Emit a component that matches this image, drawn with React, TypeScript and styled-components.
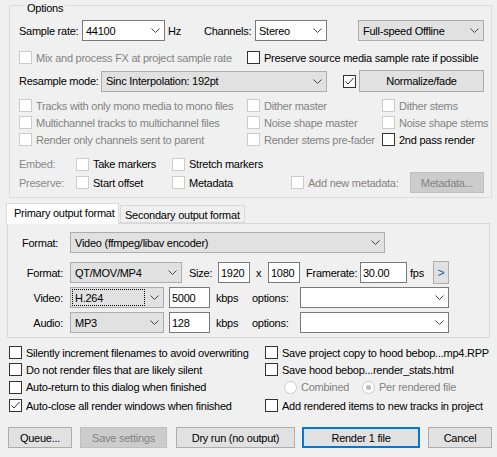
import React from "react";
import styled, { createGlobalStyle } from "styled-components";

const GlobalStyle = createGlobalStyle`
  html, body {
    margin: 0;
    padding: 0;
    background: #f0f0f0;
  }
  body {
    font-family: "Liberation Sans", Arial, sans-serif;
    font-size: 11px;
    letter-spacing: -0.25px;
    color: #000;
  }
  * {
    box-sizing: border-box;
  }
`;

const Dialog = styled.div`
  width: 497px;
  height: 457px;
  overflow: hidden;
  display: flex;
  flex-direction: column;
`;

const Group = styled.div`
  margin: 5px 5px 0 9px;
  border: 1px solid #dcdcdc;
  padding: 0 0 4px 9px;
  display: flex;
  flex-direction: column;
`;

const GroupTitle = styled.div`
  margin: -5px 0 0 6px;
  padding: 0 2px;
  width: fit-content;
  line-height: 14px;
  background: #f0f0f0;
`;

const Row = styled.div<{ $mt?: number; $h?: number }>`
  display: flex;
  align-items: center;
  height: ${(p) => p.$h ?? 21}px;
  margin-top: ${(p) => p.$mt ?? 0}px;
  white-space: nowrap;
`;

const Label = styled.span<{ $w?: number; $ml?: number; $pl?: number; $right?: boolean; $grey?: boolean }>`
  flex: none;
  width: ${(p) => (p.$w ? `${p.$w}px` : "auto")};
  margin-left: ${(p) => p.$ml ?? 0}px;
  padding-left: ${(p) => p.$pl ?? 0}px;
  text-align: ${(p) => (p.$right ? "right" : "left")};
  padding-right: ${(p) => (p.$right ? 7 : 0)}px;
  color: ${(p) => (p.$grey ? "#8a8a8a" : "#000")};
  white-space: nowrap;
`;

const CheckGrid = styled.div`
  display: grid;
  grid-template-columns: 228px 135px auto;
  grid-auto-rows: 17px;
  align-items: center;
  margin-top: 5px;
`;

const BoxEl = styled.span<{ $light?: boolean; $round?: boolean }>`
  flex: none;
  width: 13px;
  height: 13px;
  border: 1px solid ${(p) => (p.$light ? "#cccccc" : "#333333")};
  border-radius: ${(p) => (p.$round ? "50%" : "0")};
  background: #fff;
  display: flex;
  align-items: center;
  justify-content: center;
`;

const Dot = styled.span`
  width: 5px;
  height: 5px;
  border-radius: 50%;
  background: #bcbcbc;
`;

const CheckLabel = styled.label<{ $w?: number; $ml?: number; $grey?: boolean }>`
  flex: none;
  display: flex;
  align-items: center;
  gap: 4px;
  width: ${(p) => (p.$w ? `${p.$w}px` : "auto")};
  margin-left: ${(p) => p.$ml ?? 0}px;
  color: ${(p) => (p.$grey ? "#838383" : "#000")};
  white-space: nowrap;
`;

const Combo = styled.div<{ $w: number; $grey?: boolean; $ml?: number }>`
  flex: none;
  width: ${(p) => p.$w}px;
  height: 21px;
  margin-left: ${(p) => p.$ml ?? 0}px;
  border: 1px solid ${(p) => (p.$grey ? "#adadad" : "#7a7a7a")};
  background: ${(p) => (p.$grey ? "#e1e1e1" : "#fff")};
  display: flex;
  align-items: stretch;
`;

const ComboValue = styled.span<{ $grey?: boolean; $focus?: boolean }>`
  flex: 1;
  display: flex;
  align-items: center;
  overflow: hidden;
  margin: 1px 0 1px 1px;
  padding-left: ${(p) => (p.$grey ? 2 : 1)}px;
  border: 1px dotted ${(p) => (p.$focus ? "#000" : "transparent")};
`;

const ChevronBox = styled.span`
  flex: none;
  width: 18px;
  display: flex;
  align-items: center;
  justify-content: center;
`;

const TextBox = styled.div<{ $w: number; $ml?: number }>`
  flex: none;
  width: ${(p) => p.$w}px;
  height: 21px;
  margin-left: ${(p) => p.$ml ?? 0}px;
  border: 1px solid #7a7a7a;
  background: #fff;
  padding-left: 2px;
  display: flex;
  align-items: center;
`;

const Button = styled.button<{ $w: number; $ml?: number; $h?: number; $default?: boolean }>`
  flex: none;
  width: ${(p) => p.$w}px;
  height: ${(p) => p.$h ?? 21}px;
  margin: 0 0 0 ${(p) => p.$ml ?? 0}px;
  padding: 0;
  font: inherit;
  letter-spacing: inherit;
  color: #000;
  background: #e1e1e1;
  border: 1px solid ${(p) => (p.$default ? "#0078d7" : "#adadad")};
  box-shadow: ${(p) => (p.$default ? "inset 0 0 0 1px #0078d7" : "none")};
  border-radius: 0;

  &:disabled {
    background: #cccccc;
    border-color: #bfbfbf;
    color: #838383;
  }
`;

const ArrowButton = styled(Button)`
  color: #2a5a96;
  font-size: 12px;
`;

const TabBar = styled.div`
  display: flex;
  align-items: flex-end;
  margin: 4px 0 0 6px;
  height: 21px;
  position: relative;
  z-index: 1;
`;

const Tab = styled.div<{ $active?: boolean; $w: number }>`
  width: ${(p) => p.$w}px;
  height: ${(p) => (p.$active ? 21 : 18)}px;
  margin-left: ${(p) => (p.$active ? 0 : 1)}px;
  border: 1px solid #d9d9d9;
  border-bottom: ${(p) => (p.$active ? "none" : "1px solid #d9d9d9")};
  background: ${(p) => (p.$active ? "#fff" : "#f0f0f0")};
  padding: ${(p) => (p.$active ? "2px 0 0 7px" : "2px 0 0 4px")};
  margin-bottom: ${(p) => (p.$active ? -1 : 0)}px;
  white-space: nowrap;
  overflow: hidden;
  line-height: 14px;
`;

const Pane = styled.div`
  margin: 0 7px 0 7px;
  border: 1px solid #d9d9d9;
  padding: 8px 0 4px 14px;
  display: flex;
  flex-direction: column;
`;

const BottomGrid = styled.div`
  display: grid;
  grid-template-columns: 256px auto;
  grid-template-rows: 17px 17px 18px 19px;
  align-items: center;
  margin: 6px 0 0 9px;
`;

const RadioRow = styled.div`
  display: flex;
  align-items: center;
  padding-left: 19px;
`;

const ButtonRow = styled.div`
  display: flex;
  margin: 12px 0 0 8px;
`;

const CheckMark = () => (
  <svg width="11" height="11" viewBox="0 0 11 11">
    <polyline points="1.5,5.5 4,8 9.5,2" fill="none" stroke="#333" strokeWidth="1" />
  </svg>
);

const Chevron = () => (
  <svg width="9" height="5" viewBox="0 0 9 5">
    <polyline points="0.5,0.5 4.5,4.5 8.5,0.5" fill="none" stroke="#444" strokeWidth="1" />
  </svg>
);

type CheckProps = {
  text: string;
  checked?: boolean;
  grey?: boolean;
  light?: boolean;
  w?: number;
  ml?: number;
};

const Check = ({ text, checked, grey, light, w, ml }: CheckProps) => (
  <CheckLabel $w={w} $ml={ml} $grey={grey}>
    <BoxEl $light={light ?? grey}>{checked && <CheckMark />}</BoxEl>
    <span>{text}</span>
  </CheckLabel>
);

const Radio = ({ text, selected, w }: { text: string; selected?: boolean; w?: number }) => (
  <CheckLabel $w={w} $grey>
    <BoxEl $light $round>{selected && <Dot />}</BoxEl>
    <span>{text}</span>
  </CheckLabel>
);

type DropProps = { value: string; w: number; grey?: boolean; ml?: number; focus?: boolean };

const Drop = ({ value, w, grey, ml, focus }: DropProps) => (
  <Combo $w={w} $grey={grey} $ml={ml}>
    <ComboValue $grey={grey} $focus={focus}>{value}</ComboValue>
    <ChevronBox>
      <Chevron />
    </ChevronBox>
  </Combo>
);

export default function App() {
  return (
    <Dialog>
      <GlobalStyle />
      <Group>
        <GroupTitle>Options</GroupTitle>
        <Row $mt={5}>
          <Label $w={63}>Sample rate:</Label>
          <Drop value="44100" w={83} />
          <Label $w={36} $ml={3}>Hz</Label>
          <Label $w={51}>Channels:</Label>
          <Drop value="Stereo" w={72} />
          <Drop value="Full-speed Offline" w={126} grey ml={31} />
        </Row>
        <Row $mt={8} $h={17}>
          <Check text="Mix and process FX at project sample rate" grey w={228} />
          <Check text="Preserve source media sample rate if possible" />
        </Row>
        <Row $mt={4} $h={22}>
          <Label $w={82}>Resample mode:</Label>
          <Drop value="Sinc Interpolation: 192pt" w={226} grey />
          <Check text="" checked ml={16} />
          <Button $w={125} $h={22} $ml={-1}>Normalize/fade</Button>
        </Row>
        <CheckGrid>
          <Check text="Tracks with only mono media to mono files" grey />
          <Check text="Dither master" grey />
          <Check text="Dither stems" grey />
          <Check text="Multichannel tracks to multichannel files" grey />
          <Check text="Noise shape master" grey />
          <Check text="Noise shape stems" grey />
          <Check text="Render only channels sent to parent" grey />
          <Check text="Render stems pre-fader" grey />
          <Check text="2nd pass render" />
        </CheckGrid>
        <Row $mt={8} $h={16}>
          <Label $w={57} $grey>Embed:</Label>
          <Check text="Take markers" light w={96} />
          <Check text="Stretch markers" light />
        </Row>
        <Row $h={21}>
          <Label $w={57} $grey>Preserve:</Label>
          <Check text="Start offset" light w={96} />
          <Check text="Metadata" light w={119} />
          <Check text="Add new metadata:" grey w={119} />
          <Button $w={74} disabled>Metadata...</Button>
        </Row>
      </Group>

      <TabBar>
        <Tab $active $w={113}>Primary output format</Tab>
        <Tab $w={125}>Secondary output format</Tab>
      </TabBar>
      <Pane>
        <Row>
          <Label $w={48}>Format:</Label>
          <Drop value="Video (ffmpeg/libav encoder)" w={315} grey />
        </Row>
        <Row $mt={8} $h={23}>
          <Label $w={48} $right>Format:</Label>
          <Drop value="QT/MOV/MP4" w={112} grey />
          <Label $w={29} $ml={7}>Size:</Label>
          <TextBox $w={32}>1920</TextBox>
          <Label $w={18} $pl={6}>x</Label>
          <TextBox $w={32}>1080</TextBox>
          <Label $w={54} $ml={6}>Framerate:</Label>
          <TextBox $w={47}>30.00</TextBox>
          <Label $w={23} $ml={3}>fps</Label>
          <ArrowButton $w={16} $h={23}>&gt;</ArrowButton>
        </Row>
        <Row $mt={3}>
          <Label $w={48} $right>Video:</Label>
          <Drop value="H.264" w={94} grey focus />
          <TextBox $w={41} $ml={5}>5000</TextBox>
          <Label $w={36} $ml={6}>kbps</Label>
          <Label $w={48}>options:</Label>
          <Drop value="" w={149} />
        </Row>
        <Row $mt={4}>
          <Label $w={48} $right>Audio:</Label>
          <Drop value="MP3" w={94} grey />
          <TextBox $w={41} $ml={5}>128</TextBox>
          <Label $w={36} $ml={6}>kbps</Label>
          <Label $w={48}>options:</Label>
          <Drop value="" w={149} />
        </Row>
      </Pane>

      <BottomGrid>
        <Check text="Silently increment filenames to avoid overwriting" />
        <Check text="Save project copy to hood bebop...mp4.RPP" />
        <Check text="Do not render files that are likely silent" />
        <Check text="Save hood bebop...render_stats.html" />
        <Check text="Auto-return to this dialog when finished" />
        <RadioRow>
          <Radio text="Combined" w={78} />
          <Radio text="Per rendered file" selected />
        </RadioRow>
        <Check text="Auto-close all render windows when finished" checked />
        <Check text="Add rendered items to new tracks in project" />
      </BottomGrid>

      <ButtonRow>
        <Button $w={64}>Queue...</Button>
        <Button $w={87} $ml={8} disabled>Save settings</Button>
        <Button $w={119} $ml={9}>Dry run (no output)</Button>
        <Button $w={118} $ml={7} $default>Render 1 file</Button>
        <Button $w={64} $ml={8}>Cancel</Button>
      </ButtonRow>
    </Dialog>
  );
}
